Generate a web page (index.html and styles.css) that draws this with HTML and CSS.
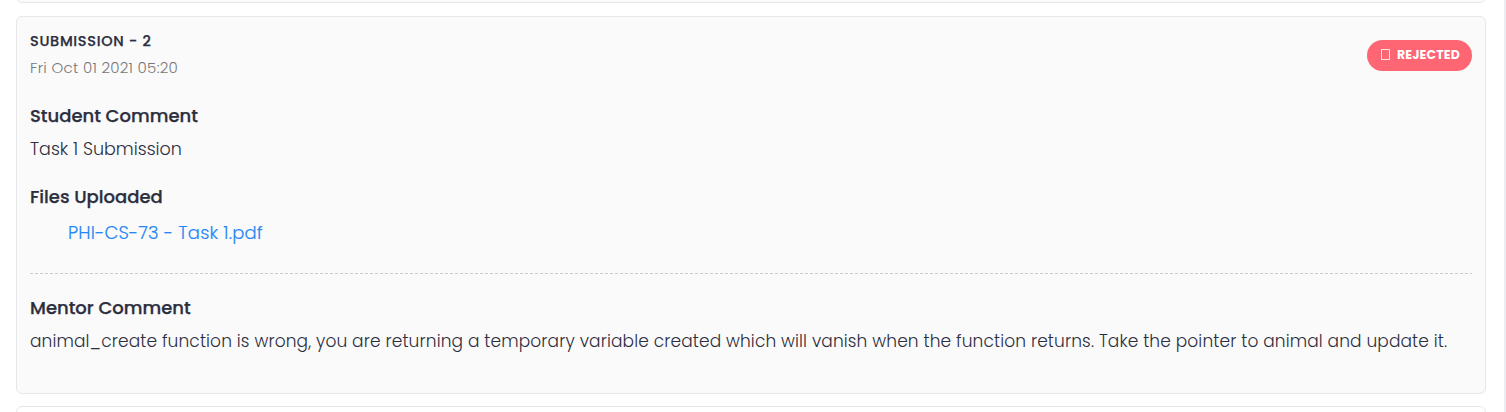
FILE: index.html
```html
<!DOCTYPE html>
<html lang="en">
<head>
<meta charset="utf-8">
<title>Submissions</title>
<link rel="stylesheet" href="styles.css">
</head>
<body>
<main class="panel">
  <section class="card card-previous"></section>
  <section class="card submission">
    <header class="submission-header">
      <div>
        <div class="title"><span>SUBMISSION - 2</span></div>
        <div class="date"><span>Fri Oct 01 2021 05:20</span></div>
      </div>
      <div class="badge"><i class="badge-icon"></i><span>REJECTED</span></div>
    </header>
    <h2 class="heading student"><span>Student Comment</span></h2>
    <p class="text task"><span>Task 1 Submission</span></p>
    <h2 class="heading files"><span>Files Uploaded</span></h2>
    <a class="file-link"><span>PHI-CS-73 - Task 1.pdf</span></a>
    <div class="divider"></div>
    <h2 class="heading mentor"><span>Mentor Comment</span></h2>
    <p class="text comment"><span>animal_create function is wrong, you are returning a temporary variable created which will vanish when the function returns. Take the pointer to animal and update it.</span></p>
  </section>
  <section class="card card-next"></section>
</main>
</body>
</html>
```
FILE: styles.css
```css
* { box-sizing: border-box; }
body { margin: 0; height: 412px; overflow: hidden; background: #ebedf2; font-family: Poppins, Inter, sans-serif; color: #2c2e3e; }
.panel { width: 1504px; height: 412px; padding: 0 18px 0 16px; background: #fff; overflow: hidden; }
.card { border: 1px solid #e6e7e8; border-radius: 6px; background: #fafafa; }
.card-previous { height: 18px; margin-top: -15px; }
.submission { height: 378px; margin-top: 13px; padding: 13px; }
.card-next { height: 60px; margin-top: 12px; background: #fff; }
.submission-header { display: flex; justify-content: space-between; align-items: flex-start; height: 71px; }
.title { font-size: 14.5px; font-weight: 500; line-height: 22px; letter-spacing: .67px; -webkit-text-stroke: .25px; }
.date { font-size: 15px; font-weight: 300; line-height: 32px; letter-spacing: .26px; color: #777; }
.badge { display: flex; align-items: center; width: 105px; height: 31px; margin-top: 10px; padding-left: 14px; border-radius: 16px; background: #fe6673; color: #fff; font-size: 12.5px; font-weight: 700; line-height: 29px; letter-spacing: .15px; }
.badge-icon { width: 9px; height: 11px; margin-top: -2px; margin-right: 7px; border: 1px solid #ffe2e4; }
.badge span { margin-top: -2px; }
.heading { margin: 0; font-size: 18px; font-weight: 500; line-height: 30px; -webkit-text-stroke: .25px; }
.text { margin: 0; font-size: 17px; font-weight: 300; line-height: 36px; white-space: nowrap; letter-spacing: .123px; }
.task { font-size: 17.5px; letter-spacing: 0; }
.files { margin-top: 15px; }
.file-link { display: block; padding-left: 38px; font-size: 18px; font-weight: 300; line-height: 42px; letter-spacing: .14px; color: #2786f5; -webkit-text-stroke: .15px; }
.divider { height: 1px; margin-top: 19px; background: repeating-linear-gradient(90deg, #cccdce 0 3px, transparent 3px 5px); }
.mentor { margin-top: 19px; }
```
